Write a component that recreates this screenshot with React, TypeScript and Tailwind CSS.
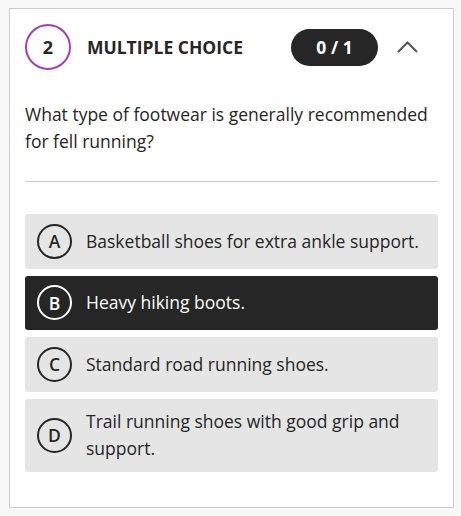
const OPTIONS = [
  { letter: 'A', text: 'Basketball shoes for extra ankle support.' },
  { letter: 'B', text: 'Heavy hiking boots.', selected: true },
  { letter: 'C', text: 'Standard road running shoes.' },
  { letter: 'D', text: 'Trail running shoes with good grip and support.' },
];

export default function App() {
  return (
    <div
      className="min-h-[516px] bg-[#f8f8f8] pl-[9px] pt-[8px]"
      style={{ fontFamily: '"Open Sans", sans-serif' }}
    >
      <div className="w-[445px] border border-[#cdcdcd] bg-white px-[15px] pt-[15px] pb-[35px]">
        {/* Header */}
        <div className="flex items-center">
          <div className="flex h-[46px] w-[46px] items-center justify-center rounded-full border-2 border-[#a23fbd] text-[18px] font-bold text-[#262626]">
            2
          </div>
          <div className="ml-[16px] flex-1 text-[17.5px] font-bold text-[#262626]">
            MULTIPLE CHOICE
          </div>
          <div className="flex h-[37px] w-[87px] items-center justify-center rounded-full bg-[#262626] text-[17.5px] font-bold text-white">
            0 / 1
          </div>
          <svg className="mr-[20px] ml-[19px] h-[12px] w-[21px]" viewBox="0 0 21 12" fill="none">
            <path d="M1 11 L10.5 1.5 L20 11" stroke="#555" strokeWidth="2" />
          </svg>
        </div>

        {/* Question */}
        <p className="mt-[31px] text-[17.5px] leading-[27px] text-[#262626]">
          What type of footwear is generally recommended for fell running?
        </p>

        <div className="mt-[26px] h-px bg-[#cdcdcd]" />

        {/* Options */}
        <div className="mt-[32px] flex flex-col gap-[7px]">
          {OPTIONS.map((o) => (
            <div
              key={o.letter}
              className={`flex items-center rounded-[3px] py-[9.75px] pl-[12px] pr-[10px] ${
                o.selected ? 'bg-[#262626] text-white' : 'bg-[#e5e5e5] text-[#262626]'
              }`}
            >
              <div
                className={`flex h-[35px] w-[35px] shrink-0 items-center justify-center rounded-full border-2 text-[17.5px] font-semibold ${
                  o.selected ? 'border-white' : 'border-[#262626]'
                }`}
              >
                {o.letter}
              </div>
              <div className={`ml-[14px] text-[17.5px] leading-[27px] ${o.selected ? 'font-medium' : ''}`}>
                {o.text}
              </div>
            </div>
          ))}
        </div>
      </div>
    </div>
  );
}
